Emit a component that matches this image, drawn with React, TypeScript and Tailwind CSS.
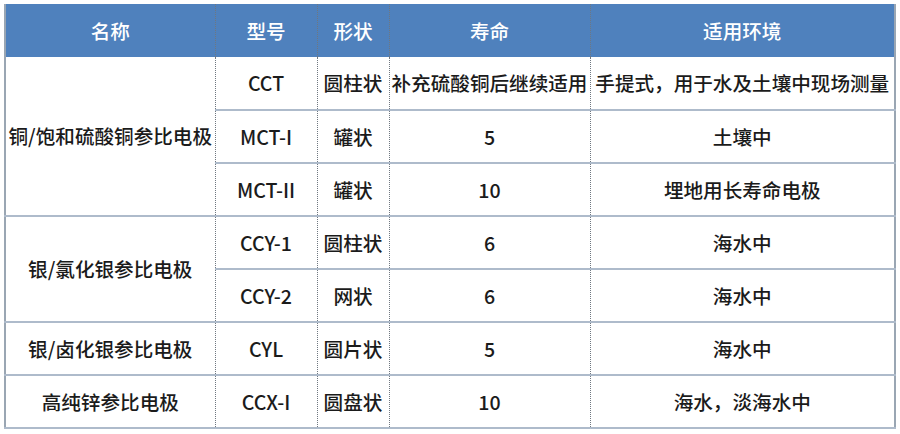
import React from "react";

const font = { fontFamily: '"Noto Sans CJK SC", "Noto Sans", sans-serif' };

type Row = { name?: string; span?: number; model: string; shape: string; life: string; env: string };

const rows: Row[] = [
  { name: "铜/饱和硫酸铜参比电极", span: 3, model: "CCT", shape: "圆柱状", life: "补充硫酸铜后继续适用", env: "手提式，用于水及土壤中现场测量" },
  { model: "MCT-I", shape: "罐状", life: "5", env: "土壤中" },
  { model: "MCT-II", shape: "罐状", life: "10", env: "埋地用长寿命电极" },
  { name: "银/氯化银参比电极", span: 2, model: "CCY-1", shape: "圆柱状", life: "6", env: "海水中" },
  { model: "CCY-2", shape: "网状", life: "6", env: "海水中" },
  { name: "银/卤化银参比电极", span: 1, model: "CYL", shape: "圆片状", life: "5", env: "海水中" },
  { name: "高纯锌参比电极", span: 1, model: "CCX-I", shape: "圆盘状", life: "10", env: "海水，淡海水中" },
];

export default function App() {
  const td =
    "p-0 text-center align-middle whitespace-nowrap border-solid border-0 border-b-2 border-b-[#aebbcb]";
  const vl = "border-l [border-left-style:dotted] border-l-[#6f7780]";
  const edgeL = "border-l-2 [border-left-style:solid] border-l-[#9aa6b3]";
  const edgeR = "border-r-2 [border-right-style:solid] border-r-[#9aa6b3]";
  return (
    <div className="w-[900px] h-[434px] bg-white pt-[4px] pl-[4px]" style={font}>
      <table className="table-fixed border-collapse text-[19.6px] font-medium text-[#1b1b1b] leading-none">
        <colgroup>
          <col style={{ width: 210 }} />
          <col style={{ width: 102 }} />
          <col style={{ width: 72 }} />
          <col style={{ width: 201 }} />
          <col style={{ width: 305 }} />
        </colgroup>
        <thead>
          <tr className="h-[53px] bg-[#4f81bd] text-white">
            <th className={`p-0 font-medium border-0 ${edgeL}`}>名称</th>
            <th className={`p-0 font-medium border-0 ${vl}`}>型号</th>
            <th className={`p-0 font-medium border-0 ${vl}`}>形状</th>
            <th className={`p-0 font-medium border-0 ${vl}`}>寿命</th>
            <th className={`p-0 font-medium border-0 ${vl} ${edgeR}`}>适用环境</th>
          </tr>
        </thead>
        <tbody>
          {rows.map((r, i) => (
            <tr key={i} className="h-[53px]">
              {r.name && (
                <td rowSpan={r.span} className={`${td} ${edgeL}`}>
                  {r.name}
                </td>
              )}
              <td className={`${td} ${vl}`}>{r.model}</td>
              <td className={`${td} ${vl}`}>{r.shape}</td>
              <td className={`${td} ${vl}`}>{r.life}</td>
              <td className={`${td} ${vl} ${edgeR}`}>{r.env}</td>
            </tr>
          ))}
        </tbody>
      </table>
    </div>
  );
}
